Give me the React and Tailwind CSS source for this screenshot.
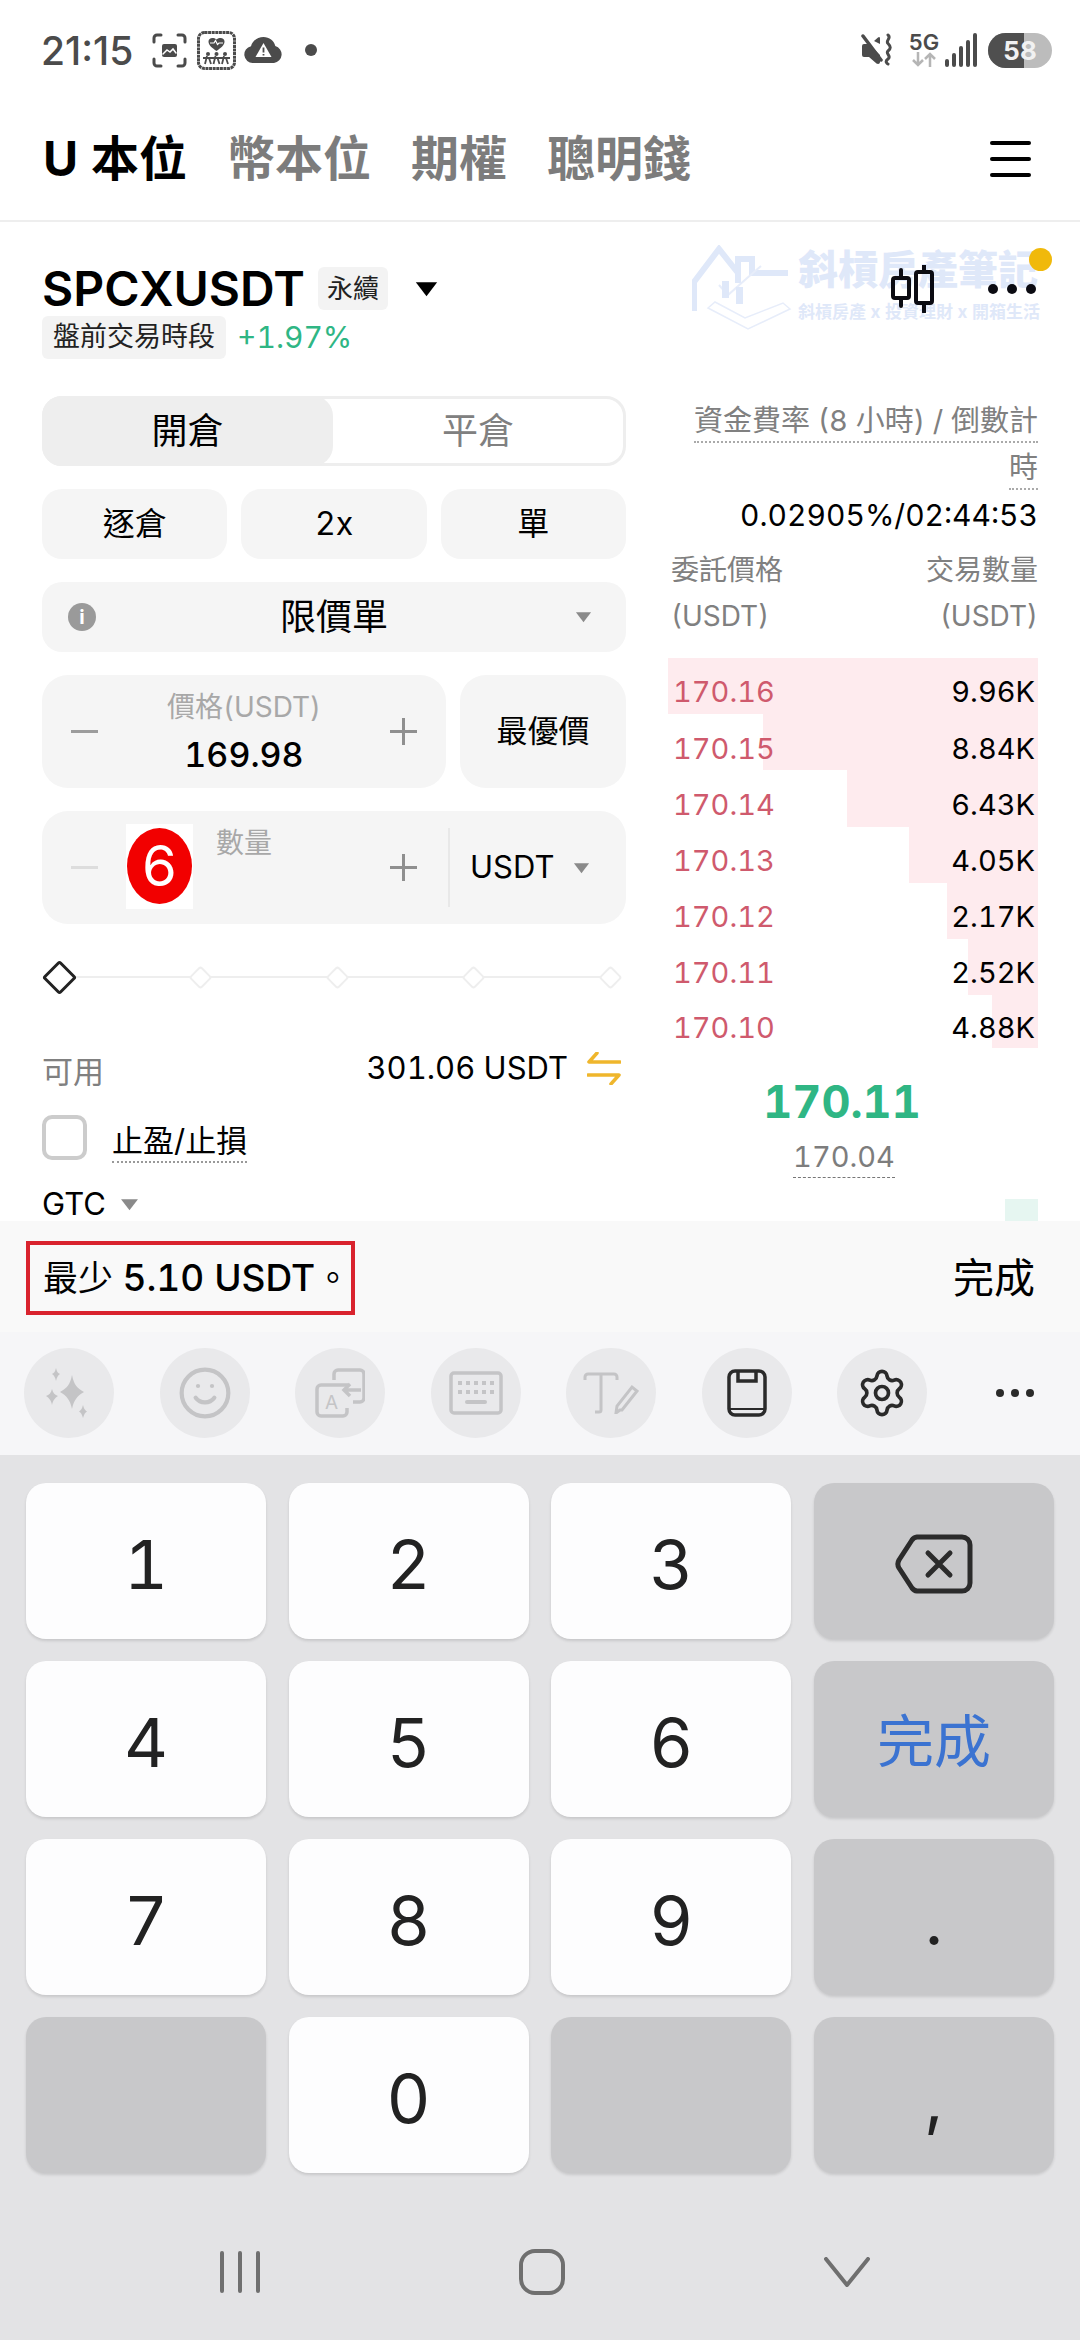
import React from 'react';
import { Settings, Smile } from 'lucide-react';

const asks = [
  ['170.16', '9.96K', 370],
  ['170.15', '8.84K', 275],
  ['170.14', '6.43K', 191],
  ['170.13', '4.05K', 129],
  ['170.12', '2.17K', 91],
  ['170.11', '2.52K', 70],
  ['170.10', '4.88K', 46],
];

function Caret({ className }) {
  return (
    <svg viewBox="0 0 18 12" className={className}>
      <path d="M1 1h16l-8 10.5z" fill="currentColor" />
    </svg>
  );
}

function Minus({ className }) {
  return <div className={`w-[27px] h-[3px] ${className}`} />;
}

function Plus() {
  return (
    <svg width="27" height="27" viewBox="0 0 27 27" className="text-[#8f8f8f]">
      <path d="M0 13.5h27M13.5 0v27" stroke="currentColor" strokeWidth="3" />
    </svg>
  );
}

function StatusLeftIcons() {
  return (
    <div className="flex items-center ml-[19px]">
      <svg width="35" height="35" viewBox="0 0 35 35" fill="none" stroke="#4b4b4b" strokeWidth="3" strokeLinecap="round">
        <path d="M2 9V5a3 3 0 0 1 3-3h4M26 2h4a3 3 0 0 1 3 3v4M33 26v4a3 3 0 0 1-3 3h-4M9 33H5a3 3 0 0 1-3-3v-4" />
        <rect x="10" y="11" width="15" height="13" rx="2" fill="#4b4b4b" stroke="none" />
        <path d="M11 21l4-4 3 2 3-3 3 4" stroke="#fff" strokeWidth="1.5" />
      </svg>
      <svg width="39" height="39" viewBox="0 0 39 39" fill="none" className="ml-[10px]">
        <rect x="1.5" y="1.5" width="36" height="36" rx="6" stroke="#4b4b4b" strokeWidth="3" strokeDasharray="3 0.6" />
        <path d="M19.5 20c-4-3-8-5.500-8-9.500 0-3 4-5 8-2 4-3 8-1 8 2 0 4-4 6.500-8 9.500z" fill="#4b4b4b" />
        <path d="M13 12h4l1.500-2.500 2 4 1.500-1.500h4" stroke="#fff" strokeWidth="1.200" />
        <g fill="#4b4b4b">
          <circle cx="11" cy="23" r="2" />
          <circle cx="19.500" cy="23" r="2" />
          <circle cx="28" cy="23" r="2" />
        </g>
        <path d="M6 27h27M10 25l-2 8M12 27l2 6M18.500 25l-2 8M20.500 27l2 6M27 25l-2 8M29 27l2 6" stroke="#4b4b4b" strokeWidth="1.800" />
      </svg>
      <svg width="39" height="26" viewBox="0 0 39 26" className="ml-[8px]">
        <path d="M9 26a8.500 8.500 0 0 1-2-16.800C8.500 3.500 14 0 19.500 0c5.800 0 10.500 3.500 11.800 9a8.700 8.700 0 0 1-1.300 17z" fill="#4b4b4b" />
        <path d="M19.500 6l8 14h-16z" fill="#fff" />
        <path d="M19.500 10.500v5M19.500 17v1.500" stroke="#4b4b4b" strokeWidth="1.800" />
      </svg>
      <div className="w-[12px] h-[12px] rounded-full bg-[#4b4b4b] ml-[22px]" />
    </div>
  );
}

function StatusRightIcons() {
  return (
    <div className="flex items-center">
      <svg width="34" height="34" viewBox="0 0 34 34" fill="none">
        <path d="M1 13a2 2 0 0 1 2-2h5l11 11v7c0 2-2 2.500-3.500 1.500L8 24H3a2 2 0 0 1-2-2zM13 8l4-3.500c1-1 2-.5 2 1V11z" fill="#4b4b4b" />
        <path d="M2 3l18 24" stroke="#4b4b4b" strokeWidth="3.500" strokeLinecap="round" />
        <path d="M27 2c4 3-3 5.500 0 8.500s3 5 0 7.500 4 5 0 8 0 5 0 5" stroke="#4b4b4b" strokeWidth="3" strokeLinecap="round" />
      </svg>
      <div className="flex flex-col items-center ml-[14px] w-[30px]">
        <span className="text-[22px] leading-[19px] font-semibold text-[#4b4b4b] whitespace-nowrap">5G</span>
        <svg width="24" height="15" viewBox="0 0 24 15" fill="none" stroke="#b5b5b5" strokeWidth="2.500">
          <path d="M6 0v13M1 8l5 5 5-5M18 15V2M13 7l5-5 5 5" />
        </svg>
      </div>
      <svg width="33" height="34" viewBox="0 0 33 34" className="ml-[6px]" fill="#4b4b4b">
        <rect x="0" y="26" width="4" height="8" rx="2" />
        <rect x="7" y="20" width="4" height="14" rx="2" />
        <rect x="14" y="13" width="4" height="21" rx="2" />
        <rect x="21" y="7" width="4" height="27" rx="2" />
        <rect x="28" y="0" width="4" height="34" rx="2" />
      </svg>
      <div className="relative ml-[10px] w-[64px] h-[35px] rounded-full bg-[#bcbcbc] overflow-hidden flex items-center justify-center">
        <div className="absolute left-0 top-0 bottom-0 w-[36px] bg-[#4f4f4f]" />
        <span className="relative text-[26px] font-bold text-[#f1f1f1]">58</span>
      </div>
    </div>
  );
}

function Watermark() {
  return (
    <div className="absolute left-[692px] top-[23px] w-[350px] h-[86px] flex text-[#dfe8f9]">
      <svg width="100" height="86" viewBox="0 0 100 86" fill="none" className="shrink-0">
        <path d="M2 66V37L27 4l19 24" stroke="#dfe8f9" strokeWidth="6" />
        <path d="M46 38V14h14v14h36" stroke="#dfe8f9" strokeWidth="6" />
        <path d="M16 63l40 21 42-20-7-6-38 15-30-16z" fill="#fff" stroke="#e7edfa" strokeWidth="1.500" />
        <path d="M27 40l9 10 18-16 15-13" stroke="#e7edfa" strokeWidth="2" />
        <rect x="30" y="36" width="7" height="17" fill="#dfe8f9" />
        <rect x="44" y="42" width="7" height="17" fill="#dfe8f9" />
      </svg>
      <div className="ml-[6px] flex flex-col">
        <span className="text-[40px] leading-[50px] font-black whitespace-nowrap">斜槓房產筆記</span>
        <span className="text-[17px] leading-[22px] mt-[6px] font-bold whitespace-nowrap">斜槓房產 x 投資理財 x 開箱生活</span>
      </div>
    </div>
  );
}

function Candles() {
  return (
    <svg width="44" height="48" viewBox="0 0 44 48" fill="none" stroke="#0b0b12" strokeWidth="4">
      <path d="M11 5v8M11 33v8M34 0v7M34 38v9" strokeLinecap="round" />
      <rect x="3" y="13" width="16" height="20" rx="2" />
      <rect x="26" y="7" width="16" height="31" rx="2" />
    </svg>
  );
}

function OrderBook() {
  return (
    <div className="w-[370px] flex flex-col">
      <div className="flex justify-end items-end h-[47px] text-[29px] text-[#808080]">
        <span className="leading-[40px] border-b-2 border-dotted border-[#aaaaaa] whitespace-nowrap">資金費率 (8 小時) / 倒數計</span>
      </div>
      <div className="flex justify-end items-end h-[47px] text-[29px] text-[#808080]">
        <span className="leading-[40px] border-b-2 border-dotted border-[#aaaaaa]">時</span>
      </div>
      <div className="h-[50px] flex items-center justify-end text-[30px] text-black whitespace-nowrap">0.02905%/02:44:53</div>
      <div className="mt-[7px] pl-[3px] flex justify-between h-[46px] items-center text-[28px] text-[#808080]">
        <span>委託價格</span>
        <span>交易數量</span>
      </div>
      <div className="pl-[3px] flex justify-between h-[46px] items-center text-[28px] text-[#808080]">
        <span>(USDT)</span>
        <span>(USDT)</span>
      </div>
      <div className="mt-[19px]">
        {asks.map(([price, qty, bar], i) => (
          <div key={price} className={`relative flex justify-between items-center pt-[12px] pl-[5px] pr-[3px] text-[29px] ${i === 6 ? 'h-[53px]' : 'h-[56.2px]'}`}>
            <div className="absolute right-0 top-0 bottom-0 bg-[#feebee]" style={{ width: bar }} />
            <span className="relative text-[#cf5a6d]">{price}</span>
            <span className="relative text-black">{qty}</span>
          </div>
        ))}
      </div>
      <div className="w-[348px] mt-[27px] h-[54px] flex items-center justify-center text-[45px] font-bold text-[#2fb684]">170.11</div>
      <div className="w-[352px] flex justify-center mt-[8px]">
        <span className="leading-[40px] text-[29px] text-[#7d7d7d] border-b border-dashed border-[#777777]">170.04</span>
      </div>
      <div className="self-end w-[33px] h-[30px] mt-[21px] bg-[#e6f6f1]" />
    </div>
  );
}

function OrderForm() {
  return (
    <div className="w-[584px] flex flex-col">
      <div className="relative h-[70px] rounded-[20px] border-[3px] border-[#eeeeee] flex bg-white">
        <div className="w-[291px] -ml-[3px] -my-[3px] bg-[#eeeeee] rounded-[20px] flex items-center justify-center text-[36px] text-black">開倉</div>
        <div className="flex-1 flex items-center justify-center text-[36px] text-[#808080]">平倉</div>
      </div>
      <div className="mt-[23px] flex gap-[14px]">
        {['逐倉', '2x', '單'].map((t) => (
          <div key={t} className="flex-1 h-[70px] rounded-[20px] bg-[#f5f5f5] flex items-center justify-center text-[32px] text-black">{t}</div>
        ))}
      </div>
      <div className="mt-[23px] h-[70px] rounded-[20px] bg-[#f5f5f5] relative flex items-center justify-center text-[36px] text-black">
        <div className="absolute left-[26px] top-[21px] w-[28px] h-[28px] rounded-full bg-[#9a9a9a] flex items-center justify-center text-[20px] font-bold text-white">i</div>
        限價單
        <Caret className="absolute right-[34px] top-[29px] w-[17px] h-[12px] text-[#8a8a8a]" />
      </div>
      <div className="mt-[23px] flex gap-[14px]">
        <div className="w-[404px] h-[113px] rounded-[26px] bg-[#f5f5f5] flex items-center justify-between pl-[29px] pr-[29px]">
          <Minus className="bg-[#9c9c9c]" />
          <div className="flex flex-col items-center">
            <span className="text-[28px] leading-[40px] text-[#a8a8a8]">價格(USDT)</span>
            <span className="text-[34px] leading-[44px] mt-[6px] font-medium text-black">169.98</span>
          </div>
          <Plus />
        </div>
        <div className="flex-1 h-[113px] rounded-[26px] bg-[#f5f5f5] flex items-center justify-center text-[31px] text-black">最優價</div>
      </div>
      <div className="mt-[23px] h-[113px] rounded-[26px] bg-[#f5f5f5] relative flex items-center pl-[29px]">
        <Minus className="bg-[#dddddd]" />
        <div className="ml-[28px] -mt-[3px] w-[67px] h-[85px] bg-white flex items-center justify-center">
          <div className="w-[65px] h-[76px] rounded-[50%] bg-[#f20000] flex items-center justify-center text-[56px] text-white">6</div>
        </div>
        <span className="absolute left-[174px] top-[12px] text-[28px] leading-[40px] text-[#a8a8a8]">數量</span>
        <div className="ml-[197px]">
          <Plus />
        </div>
        <div className="ml-[31px] w-[2px] h-[79px] bg-[#e8e8e8]" />
        <span className="ml-[20px] text-[31px] text-black">USDT</span>
        <Caret className="ml-[19px] w-[17px] h-[12px] text-[#8a8a8a]" />
      </div>
      <div className="relative mt-[35px] h-[36px] flex items-center justify-between pl-[5px] pr-[7px]">
        <div className="absolute left-[30px] right-[15px] top-[17px] h-[2px] bg-[#eeeeee]" />
        <div className="relative w-[25px] h-[25px] rotate-45 rounded-[3px] border-[3px] border-[#222222] bg-white" />
        {[0, 1, 2, 3].map((k) => (
          <div key={k} className="relative w-[17px] h-[17px] rotate-45 rounded-[3px] border-2 border-[#eeeeee] bg-white" />
        ))}
      </div>
      <div className="mt-[53px] h-[40px] flex items-center justify-between text-[31px]">
        <span className="text-[#808080] mt-[8px]">可用</span>
        <div className="flex items-center text-black">
          <span>301.06 USDT</span>
          <svg width="34" height="33" viewBox="0 0 34 33" fill="none" stroke="#efb62c" strokeWidth="3.500" className="ml-[19px] mr-[5px]">
            <path d="M10 1L2 10h31M24 32l8-9H1" strokeLinecap="round" strokeLinejoin="round" />
          </svg>
        </div>
      </div>
      <div className="mt-[27px] flex items-start">
        <div className="w-[45px] h-[45px] rounded-[10px] border-[4px] border-[#cccccc] bg-white" />
        <span className="ml-[25px] mt-[6px] leading-[40px] text-[31px] text-black border-b-2 border-dotted border-[#999999]">止盈/止損</span>
      </div>
      <div className="mt-[22px] h-[38px] flex items-center text-[31px] leading-[38px] text-black">
        GTC
        <Caret className="ml-[14px] w-[19px] h-[13px] text-[#8a8a8a]" />
      </div>
    </div>
  );
}

function Key({ children, special, className = 'text-[68px] text-[#222222]' }) {
  return (
    <div className={`h-[156px] rounded-[20px] pt-[5px] flex items-center justify-center shadow-[0_2px_3px_rgba(0,0,0,0.12)] ${special ? 'bg-[#c8c8ca]' : 'bg-[#fdfdfe]'} ${className}`}>
      {children}
    </div>
  );
}

function ToolBtn({ children }) {
  return <div className="w-[90px] h-[90px] rounded-full bg-[#e9e9eb] flex items-center justify-center shrink-0">{children}</div>;
}

export default function App() {
  return (
    <div className="w-[1080px] h-[2340px] overflow-hidden bg-white flex flex-col tabular-nums font-['Inter','Noto_Sans_CJK_TC',sans-serif]">
      <div className="h-[100px] shrink-0 flex items-center justify-between pl-[41px] pr-[28px]">
        <div className="flex items-center">
          <span className="w-[92px] whitespace-nowrap [font-variant-numeric:normal] text-[39px] font-medium text-[#4b4b4b] leading-none">21:15</span>
          <StatusLeftIcons />
        </div>
        <StatusRightIcons />
      </div>

      <div className="h-[122px] shrink-0 border-b-2 border-[#eeeeee] flex items-center justify-between pl-[43px] pr-[49px] pb-[2px]">
        <div className="flex items-center gap-[40px] text-[48px] font-bold text-[#7c7c7c] whitespace-nowrap">
          <span className="text-black">U 本位</span>
          <span>幣本位</span>
          <span>期權</span>
          <span>聰明錢</span>
        </div>
        <div className="flex flex-col gap-[12px]">
          <div className="w-[41px] h-[4px] bg-black rounded-full" />
          <div className="w-[41px] h-[4px] bg-black rounded-full" />
          <div className="w-[41px] h-[4px] bg-black rounded-full" />
        </div>
      </div>

      <div className="h-[999px] shrink-0 overflow-hidden flex flex-col">
        <div className="relative h-[174px] shrink-0 pl-[42px] pr-[42px] pt-[45px]">
          <Watermark />
          <div className="relative flex items-center h-[43px]">
            <span className="text-[48px] font-semibold text-black leading-none whitespace-nowrap">SPCXUSDT</span>
            <span className="ml-[13px] w-[70px] h-[43px] rounded-[6px] bg-[#f3f3f3] flex items-center justify-center text-[26px] text-[#222222]">永續</span>
            <Caret className="ml-[26px] w-[25px] h-[16px] text-black" />
          </div>
          <div className="relative flex items-center mt-[6px] h-[43px]">
            <span className="w-[184px] h-[43px] rounded-[6px] bg-[#f3f3f3] flex items-center justify-center text-[27px] text-[#222222] whitespace-nowrap">盤前交易時段</span>
            <span className="ml-[11px] text-[30px] text-[#2fb684]">+1.97%</span>
          </div>
          <div className="absolute left-[890px] top-[43px]">
            <Candles />
          </div>
          <div className="absolute left-[988px] top-[62px] flex gap-[9px]">
            <div className="w-[10px] h-[10px] rounded-full bg-[#0b0b12]" />
            <div className="w-[10px] h-[10px] rounded-full bg-[#0b0b12]" />
            <div className="w-[10px] h-[10px] rounded-full bg-[#0b0b12]" />
          </div>
          <div className="absolute left-[1029px] top-[26px] w-[23px] h-[23px] rounded-full bg-[#f0b90b]" />
        </div>
        <div className="flex justify-between pl-[42px] pr-[42px]">
          <OrderForm />
          <OrderBook />
        </div>
      </div>

      <div className="h-[111px] shrink-0 bg-[#f9f9f9] flex items-start justify-between pl-[26px] pr-[45px]">
        <div className="mt-[20px] w-[329px] h-[74px] border-4 border-[#d9232e] flex items-center pl-[13px] text-[35px] text-black whitespace-nowrap">
          最少&nbsp;<span className="font-medium text-[37px]">5.10 USDT</span>。
        </div>
        <span className="mt-[32px] text-[41px] leading-[50px] text-black">完成</span>
      </div>

      <div className="h-[123px] shrink-0 bg-[#f6f6f8] flex items-start pl-[24px] pt-[16px] gap-[45.5px]">
        <ToolBtn>
          <svg width="48" height="50" viewBox="0 0 48 50" fill="#c4c4c6">
            <path d="M27 7c2 10 5 13 12 17-7 4-10 8-12 17-2-9-5-13-12-17 7-4 10-7 12-17z" />
            <path d="M11 0c1 4 2 5 4 6-2 1-3 3-4 7-1-4-2-6-4-7 2-1 3-2 4-6zM7 21c1 4 3 6 6 7-3 2-5 4-6 9-1-5-3-7-6-9 3-1 5-3 6-7zM38 37c1 4 2 5 4 6.500-2 1-3 3-4 6.500-1-3.500-2-5.500-4-6.500 2-1.500 3-2.500 4-6.500z" />
          </svg>
        </ToolBtn>
        <ToolBtn>
          <Smile size={56} strokeWidth={1.8} color="#c4c4c6" />
        </ToolBtn>
        <ToolBtn>
          <svg width="50" height="50" viewBox="0 0 50 50" fill="none" stroke="#c4c4c6" strokeWidth="3.500">
            <path d="M19 12V6a4 4 0 0 1 4-4h22a4 4 0 0 1 4 4v24a4 4 0 0 1-4 4h-7" />
            <path d="M33 17H6a4 4 0 0 0-4 4v23a4 4 0 0 0 4 4h22a4 4 0 0 0 4-4v-4" />
            <path d="M46 22H29m6-6l-6 6 6 6" />
            <text x="10" y="41" fontSize="19" fill="#c4c4c6" stroke="none">A</text>
          </svg>
        </ToolBtn>
        <ToolBtn>
          <svg width="54" height="44" viewBox="0 0 54 44">
            <rect x="2" y="2" width="50" height="40" rx="3" fill="none" stroke="#c4c4c6" strokeWidth="3.500" />
            <path d="M9 12h36M9 21h36" stroke="#c4c4c6" strokeWidth="4" strokeDasharray="4 4" />
            <path d="M18 31h18" stroke="#c4c4c6" strokeWidth="4" strokeLinecap="round" />
          </svg>
        </ToolBtn>
        <ToolBtn>
          <svg width="56" height="42" viewBox="0 0 56 42" fill="none" stroke="#c4c4c6" strokeWidth="3">
            <path d="M2 8V5a3 3 0 0 1 3-3h26a3 3 0 0 1 3 3v3M18 2v36a2 2 0 0 1-2 2h-4" />
            <path d="M37 38l-4 3 1-7 15-19 5 4-15 19z" />
          </svg>
        </ToolBtn>
        <ToolBtn>
          <svg width="40" height="48" viewBox="0 0 40 48" fill="none" stroke="#2a2a2a" strokeWidth="3.500">
            <rect x="2" y="2" width="36" height="44" rx="6" />
            <path d="M11 2v10h18V2" />
            <path d="M2 40h36" strokeWidth="2" />
          </svg>
        </ToolBtn>
        <ToolBtn>
          <Settings size={52} strokeWidth={1.7} color="#2a2a2a" />
        </ToolBtn>
        <div className="flex items-center gap-[7px] h-[90px] ml-[23px]">
          <div className="w-[8px] h-[8px] rounded-full bg-[#2a2a2a]" />
          <div className="w-[8px] h-[8px] rounded-full bg-[#2a2a2a]" />
          <div className="w-[8px] h-[8px] rounded-full bg-[#2a2a2a]" />
        </div>
      </div>

      <div className="flex-1 bg-[#e3e3e5] flex flex-col">
        <div className="grid grid-cols-4 gap-x-[22.67px] gap-y-[22px] pl-[26px] pr-[26px] pt-[28px]">
          <Key>1</Key>
          <Key>2</Key>
          <Key>3</Key>
          <Key special>
            <svg width="78" height="60" viewBox="0 0 78 60" fill="none" stroke="#2b2b2b" strokeWidth="5" strokeLinejoin="round">
              <path d="M22 3h45a8 8 0 0 1 8 8v38a8 8 0 0 1-8 8H22a7 7 0 0 1-5-3L4 34a8 8 0 0 1 0-8L17 6a7 7 0 0 1 5-3z" />
              <path d="M33 19l22 22M55 19L33 41" strokeLinecap="round" />
            </svg>
          </Key>
          <Key>4</Key>
          <Key>5</Key>
          <Key>6</Key>
          <Key special className="text-[57px] text-[#3b73d1]">完成</Key>
          <Key>7</Key>
          <Key>8</Key>
          <Key>9</Key>
          <Key special>.</Key>
          <Key special />
          <Key>0</Key>
          <Key special />
          <Key special>,</Key>
        </div>
        <div className="flex items-center mt-[76px] pl-[220px] gap-[259px]">
          <svg width="40" height="46" viewBox="0 0 40 46" stroke="#6f6f6f" strokeWidth="4" strokeLinecap="round">
            <path d="M2 4v38M20 4v38M38 4v38" />
          </svg>
          <svg width="46" height="46" viewBox="0 0 46 46" fill="none" stroke="#6f6f6f" strokeWidth="4">
            <rect x="2" y="2" width="42" height="42" rx="14" />
          </svg>
          <svg width="46" height="30" viewBox="0 0 46 30" fill="none" stroke="#6f6f6f" strokeWidth="4" strokeLinecap="round" strokeLinejoin="round">
            <path d="M2 2l21 26L44 2" />
          </svg>
        </div>
      </div>
    </div>
  );
}
